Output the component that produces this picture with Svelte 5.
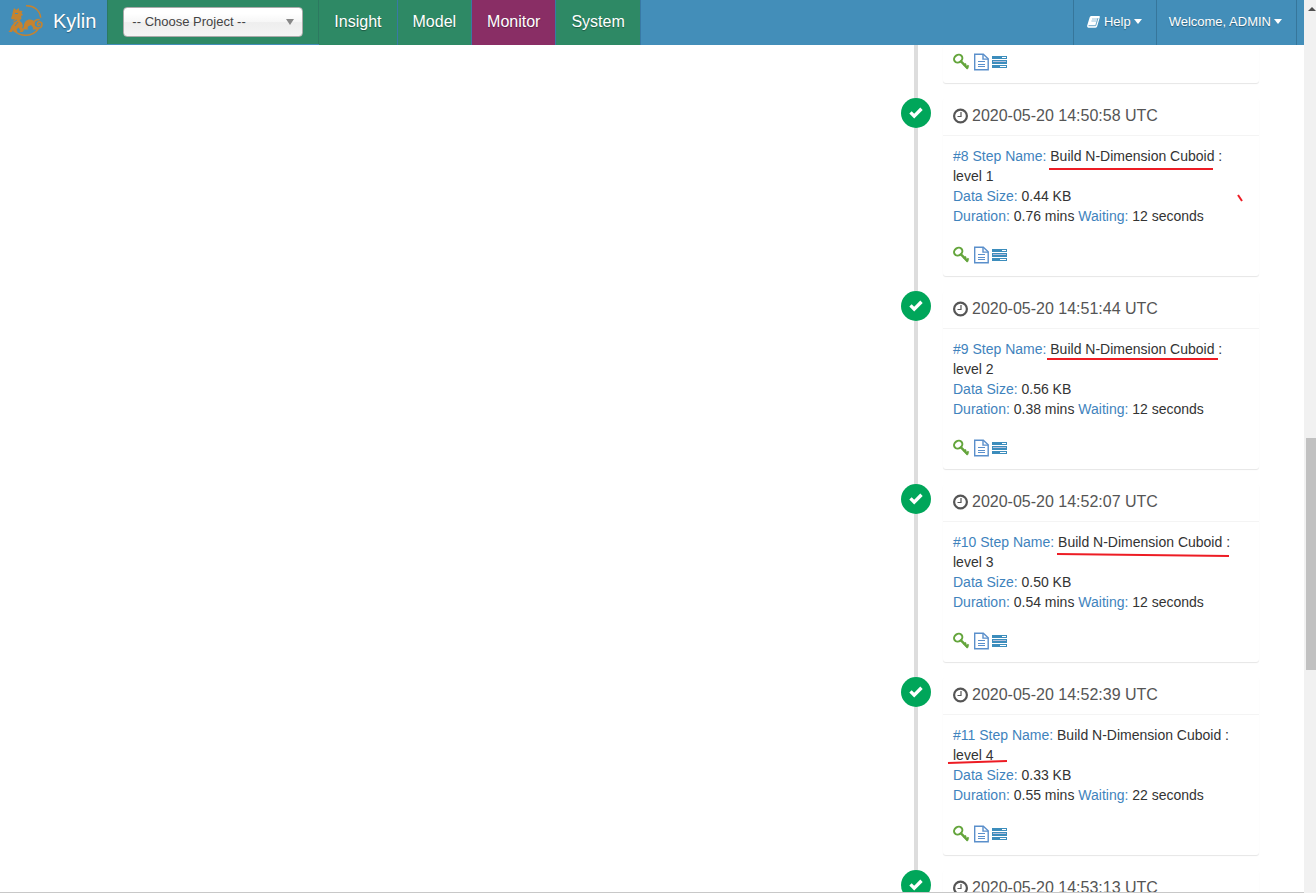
<svelte:options runes={true} />

<script>
	let project = $state('');
	let active = $state('Monitor');

	const tabs = ['Insight', 'Model', 'Monitor', 'System'];

	// marks: highlight strokes drawn over a card, relative to its top left corner
	const steps = [
		{ id: 8, time: '2020-05-20 14:50:58 UTC', level: 1, size: '0.44', duration: '0.76', waiting: 12, marks: ['M106 71H270', 'M295 97l4 6'] },
		{ id: 9, time: '2020-05-20 14:51:44 UTC', level: 2, size: '0.56', duration: '0.38', waiting: 12, marks: ['M104 68H275'] },
		{ id: 10, time: '2020-05-20 14:52:07 UTC', level: 3, size: '0.50', duration: '0.54', waiting: 12, marks: ['M114 70l172 2'] },
		{ id: 11, time: '2020-05-20 14:52:39 UTC', level: 4, size: '0.33', duration: '0.55', waiting: 22, marks: ['M5 86l59 -2'] }
	];
	const nextTime = '2020-05-20 14:53:13 UTC';
</script>

{#snippet stepActions()}
	<div class="timeline-footer">
		<button type="button" aria-label="Parameters">
			<svg width="18" height="18" viewBox="0 0 18 18" fill="none" stroke="#64a53c">
				<ellipse cx="5.200" cy="5.600" rx="4.300" ry="3.700" transform="rotate(-35 5.2 5.6)" stroke-width="2" />
				<path d="M7.500 7.800L15 15.600" stroke-width="2.400" />
				<path d="M10.800 12.800l2.200-2.200M13 15l2.600-2.600" stroke-width="2" />
			</svg>
		</button>
		<button type="button" aria-label="Log">
			<svg width="15" height="18" viewBox="0 0 15 18" fill="none" stroke="#5a8fcb">
				<path d="M.7 1.200h8.600l4.900 4.600v11H.7z" stroke-width="1.400" />
				<path d="M9 1.200v4.900h5.200" stroke-width="1.400" />
				<path d="M4 8.500h7M4 11.500h7M4 13.500h7" stroke-width="1" />
			</svg>
		</button>
		<button type="button" aria-label="MapReduce job">
			<svg width="15" height="18" viewBox="0 0 15 18">
				<path fill="#3c8dbc" d="M0 3h15v3H0zM0 7h15v4H0zM0 12h15v3H0z" />
				<path fill="#fff" d="M10 4h4v1h-4zM8 13h6v1H8z" />
				<path fill="#b4bfdc" d="M1 8h13v1H1z" />
			</svg>
		</button>
	</div>
{/snippet}

{#snippet caret()}
	<svg width="8" height="5" viewBox="0 0 8 5" fill="currentColor"><path d="M0 0h8L4 5z" /></svg>
{/snippet}

{#snippet status()}
	<span class="status">
		<svg width="14" height="12" viewBox="0 0 14 12" fill="none" stroke="#fff" stroke-width="3.400">
			<path d="M1.500 5.400l3.700 3.700 7.300-7.300" />
		</svg>
	</span>
{/snippet}

{#snippet header(time)}
	<h3 class="timeline-header">
		<svg width="15" height="16" viewBox="0 0 15 16" fill="none" stroke="#555">
			<circle cx="7.500" cy="8" r="6.400" stroke-width="2.200" />
			<path d="M8 4v4.500H4.500" stroke-width="1.200" />
		</svg>
		<span>{time}</span>
	</h3>
{/snippet}

<div class="window">
	<div class="page">
		<header class="navbar">
			<a class="brand" href="#home">
				<svg width="36" height="34" viewBox="0 0 36 34" fill="none" stroke="#c58330">
					<path d="M18 1.700c7.500-.4 14 4.600 14.700 12" stroke-width="1.500" />
					<path d="M6 26.500c6.500 6.500 18.500 7 24.500-2" stroke-width="1.500" />
					<path fill="#c58330" stroke="none" d="M6 4l2 2 3-2 0 2.500 3.500.5-1 2 1.500 2-2 1 .5 2.500-2 2 2.500 2.500 1 3-1 1.500 2 2.500-1.500 2h-3l1-1.500-2-3-2 2 1 2.500H6l-1-2-1 2H.5l1.500-2 1.500-4 2.500-3-1.500-1 2.500-3-2 .5-2-1 1-3L5 7z" />
					<path fill="#c58330" stroke="none" d="M16 22c0-4 2.500-6.500 6-6.500 4 0 5 3 5 6l2.500 4h-5l.8-1.500-2.300-3-3 1.500-.5 1.800 1 1.200h-6l1-2z" />
					<path d="M27 23c4 2.500 7 .5 7-2.500s-4-3.500-4.500-1 1.500 2.500 2.500 1M26 19c0-3 4-4 5.500-3" stroke-width="1.600" />
					<path d="M7 9.500h3M4 19l5-3M7 22l3-4" stroke="#438db8" stroke-width="1" />
				</svg>
				<span>Kylin</span>
			</a>
			<div class="project">
				<select bind:value={project} aria-label="Project">
					<option value="">-- Choose Project --</option>
				</select>
			</div>
			<nav class="tabs">
				{#each tabs as tab}
					<a href="#{tab.toLowerCase()}" class:active={active === tab} onclick={() => (active = tab)}>{tab}</a>
				{/each}
			</nav>
			<div class="user-menu">
				<button type="button">
					<svg class="book" width="13" height="12" viewBox="0 0 13 12">
						<path fill="#fff" d="M4 0h8q1.200 0 .8 1.200L10.300 10Q10 11.800 8.500 11.800H1.500Q-.2 11.500.2 9.500L2.700 1.300Q3 .2 4 0z" />
						<path fill="none" stroke="#7fb2d0" stroke-width=".8" d="M5 3h5M4.400 5h5" />
						<path fill="none" stroke="#438eb9" stroke-width=".8" d="M1.500 9.700h7.200L11 2" />
					</svg>
					<span>Help</span>
					{@render caret()}
				</button>
				<button type="button">
					<span>Welcome, ADMIN</span>
					{@render caret()}
				</button>
			</div>
		</header>

		<main class="content">
			<ul class="timeline">
				<li>
					<div class="timeline-item cut">
						{@render stepActions()}
					</div>
				</li>
				{#each steps as step (step.id)}
					<li>
						{@render status()}
						<div class="timeline-item">
							{@render header(step.time)}
							<div class="timeline-body">
								<div><span class="label">#{step.id} Step Name:</span> Build N-Dimension Cuboid : level {step.level}</div>
								<div><span class="label">Data Size:</span> {step.size} KB</div>
								<div>
									<span class="label">Duration:</span> {step.duration} mins
									<span class="label">Waiting:</span> {step.waiting} seconds
								</div>
							</div>
							{@render stepActions()}
							<svg class="marks">
								{#each step.marks as d}
									<path {d} />
								{/each}
							</svg>
						</div>
					</li>
				{/each}
				<li>
					{@render status()}
					<div class="timeline-item">
						{@render header(nextTime)}
					</div>
				</li>
			</ul>
		</main>
	</div>

	<div class="scrollbar" aria-hidden="true">
		<svg width="8" height="4" viewBox="0 0 8 4"><path fill="#505050" d="M0 4L4 0l4 4z" /></svg>
		<div class="thumb"></div>
	</div>
</div>

<style>
	:global(body) {
		margin: 0;
		background: #fff;
	}

	.window {
		display: flex;
		height: 100vh;
		overflow: hidden;
		font-family: 'Liberation Sans', Arial, sans-serif;
		font-size: 14px;
		line-height: 20px;
		color: #333;
	}

	.page {
		flex: 1;
		min-width: 0;
		display: flex;
		flex-direction: column;
		box-sizing: border-box;
		border-bottom: 1px solid #c8c8c8;
	}

	button {
		font: inherit;
		color: inherit;
		background: none;
		border: 0;
		padding: 0;
		cursor: pointer;
	}

	svg {
		display: block;
		flex-shrink: 0;
	}

	.navbar {
		display: flex;
		height: 45px;
		flex-shrink: 0;
		background: #438eb9;
		color: #fff;
		text-shadow: 0 1px 1px rgba(0, 0, 0, 0.35);
	}

	.brand {
		display: flex;
		align-items: center;
		gap: 9px;
		padding: 0 11px 3px 8px;
		color: inherit;
		font-size: 20px;
		text-decoration: none;
	}

	.project {
		position: relative;
		height: 44px;
		box-sizing: border-box;
		padding: 7px 15px;
		background: #2e8965;
		border: 1px solid #2c7960;
		border-width: 0 1px;
	}

	.project select {
		display: block;
		width: 180px;
		height: 30px;
		padding: 0 8px 2px;
		appearance: none;
		border: 1px solid #aaa;
		border-radius: 4px;
		background: linear-gradient(#fff 20%, #f6f6f6 50%, #eee 52%, #f4f4f4 100%);
		color: #444;
		font: 13px 'Liberation Sans', Arial, sans-serif;
	}

	.project::after {
		content: '';
		position: absolute;
		top: 19px;
		right: 24px;
		border: solid transparent;
		border-width: 6px 4px 0;
		border-top-color: #888;
		pointer-events: none;
	}

	.tabs {
		display: flex;
	}

	.tabs a {
		display: flex;
		align-items: center;
		padding: 0 15px 2px;
		border-right: 1px solid #3879a5;
		background: #2e8965;
		color: inherit;
		font-size: 16px;
		text-decoration: none;
	}

	.tabs a.active {
		background: #892e65;
	}

	.user-menu {
		display: flex;
		margin-left: auto;
		margin-right: 7px;
		border-right: 1px solid #36769b;
		font-size: 13px;
	}

	.user-menu button {
		display: flex;
		align-items: center;
		gap: 3px;
		padding: 0 14px 2px 12px;
		border-left: 1px solid #36769b;
		text-shadow: inherit;
	}

	.user-menu .book {
		margin: 0 1px;
	}

	.content {
		flex: 1;
		min-height: 0;
		overflow: hidden;
	}

	.timeline {
		position: relative;
		width: 358px;
		margin: 0 45px 0 auto;
		padding: 0;
		list-style: none;
	}

	.timeline::before {
		content: '';
		position: absolute;
		top: 0;
		bottom: 0;
		left: 13px;
		width: 4px;
		background: #ddd;
	}

	.timeline li {
		display: flex;
		align-items: flex-start;
		margin-bottom: 15px;
	}

	.status {
		position: relative;
		display: flex;
		align-items: center;
		justify-content: center;
		width: 30px;
		height: 30px;
		border-radius: 50%;
		background: #00a65a;
	}

	.timeline-item {
		position: relative;
		flex: 1;
		margin-left: 12px;
		border-radius: 3px;
		background: #fff;
		box-shadow: 0 1px 1px rgba(0, 0, 0, 0.1);
	}

	.timeline-item.cut {
		margin-left: 42px;
	}

	.timeline-header {
		display: flex;
		align-items: center;
		gap: 4px;
		margin: 0;
		padding: 9px 10px 11px;
		border-bottom: 1px solid #f4f4f4;
		color: #555;
		font-size: 16px;
		font-weight: 400;
		line-height: 17px;
	}

	.timeline-body {
		padding: 10px;
	}

	.label {
		color: #3f83bd;
	}

	.timeline-footer {
		display: flex;
		align-items: center;
		gap: 3px;
		height: 20px;
		padding: 9px 10px 11px;
	}

	.cut .timeline-footer {
		padding-top: 7px;
	}

	.marks {
		position: absolute;
		inset: 0;
		width: 100%;
		height: 100%;
		overflow: visible;
		fill: none;
		stroke: #ed1c24;
		stroke-width: 2;
		pointer-events: none;
	}

	.scrollbar {
		display: flex;
		flex-direction: column;
		align-items: flex-end;
		width: 12px;
		background: #f1f1f1;
	}

	.scrollbar svg {
		margin-top: 7px;
	}

	.scrollbar .thumb {
		width: 10px;
		height: 26%;
		margin-top: 427px;
		background: #c1c1c1;
	}
</style>
